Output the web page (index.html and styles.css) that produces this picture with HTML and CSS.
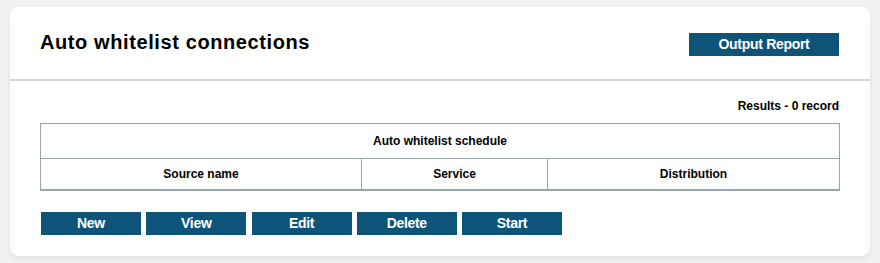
FILE: index.html
```html
<!DOCTYPE html>
<html>
<head>
<meta charset="utf-8">
<link rel="stylesheet" href="styles.css">
</head>
<body>
<div class="card">
  <div class="card-header">
    <h1 class="title">Auto whitelist connections</h1>
    <button class="btn btn-report">Output Report</button>
  </div>
  <div class="card-body">
    <div class="results">Results - 0 record</div>
    <table class="grid">
      <colgroup>
        <col class="c1"><col class="c2"><col class="c3">
      </colgroup>
      <thead>
        <tr class="caption-row"><th colspan="3">Auto whitelist schedule</th></tr>
        <tr class="head-row"><th>Source name</th><th>Service</th><th>Distribution</th></tr>
      </thead>
    </table>
    <div class="actions">
      <button class="btn">New</button>
      <button class="btn">View</button>
      <button class="btn">Edit</button>
      <button class="btn">Delete</button>
      <button class="btn">Start</button>
    </div>
  </div>
</div>
</body>
</html>
```
FILE: styles.css
```css
html, body {
  margin: 0;
  padding: 0;
}
body {
  background: #f0f1f3;
  font-family: "Liberation Sans", Arial, sans-serif;
  color: #000;
  padding: 7px 10px;
}
.card {
  background: #fff;
  border-radius: 9px;
  box-shadow: 0 2px 5px rgba(0, 0, 0, 0.07);
  width: 860px;
  height: 249px;
  box-sizing: border-box;
}
.card-header {
  display: flex;
  justify-content: space-between;
  align-items: flex-start;
  height: 74px;
  box-sizing: border-box;
  padding: 23px 31px 0 30px;
  border-bottom: 2px solid #d5d6d8;
}
.title {
  margin: 0;
  font-size: 20px;
  line-height: 24px;
  font-weight: bold;
  letter-spacing: 0.6px;
}
.btn {
  border: 0;
  margin: 0;
  padding: 0;
  background: #0e5479;
  color: #fff;
  font-family: "Liberation Sans", Arial, sans-serif;
  font-size: 14px;
  font-weight: bold;
  letter-spacing: -0.3px;
  width: 100px;
  height: 23px;
  line-height: 23px;
  text-align: center;
}
.btn-report {
  width: 150px;
  margin-top: 3px;
}
.card-body {
  padding: 18px 30px 0 30px;
}
.results {
  text-align: right;
  font-size: 12px;
  line-height: 14px;
  font-weight: bold;
  padding-right: 1px;
}
.grid {
  margin-top: 10px;
  width: 800px;
  border-collapse: collapse;
  table-layout: fixed;
  border-bottom: 2px solid #97a6b1;
}
.c1 { width: 321px; }
.c2 { width: 186px; }
.grid th {
  border: 1px solid #97a6b1;
  font-size: 12px;
  font-weight: bold;
  text-align: center;
  padding: 0;
}
.grid .caption-row th {
  height: 34px;
}
.grid .head-row th {
  height: 30px;
  border-bottom: 2px solid #97a6b1;
}
.actions {
  display: flex;
  gap: 5.25px;
  margin-top: 21px;
  padding-left: 1px;
}
```
